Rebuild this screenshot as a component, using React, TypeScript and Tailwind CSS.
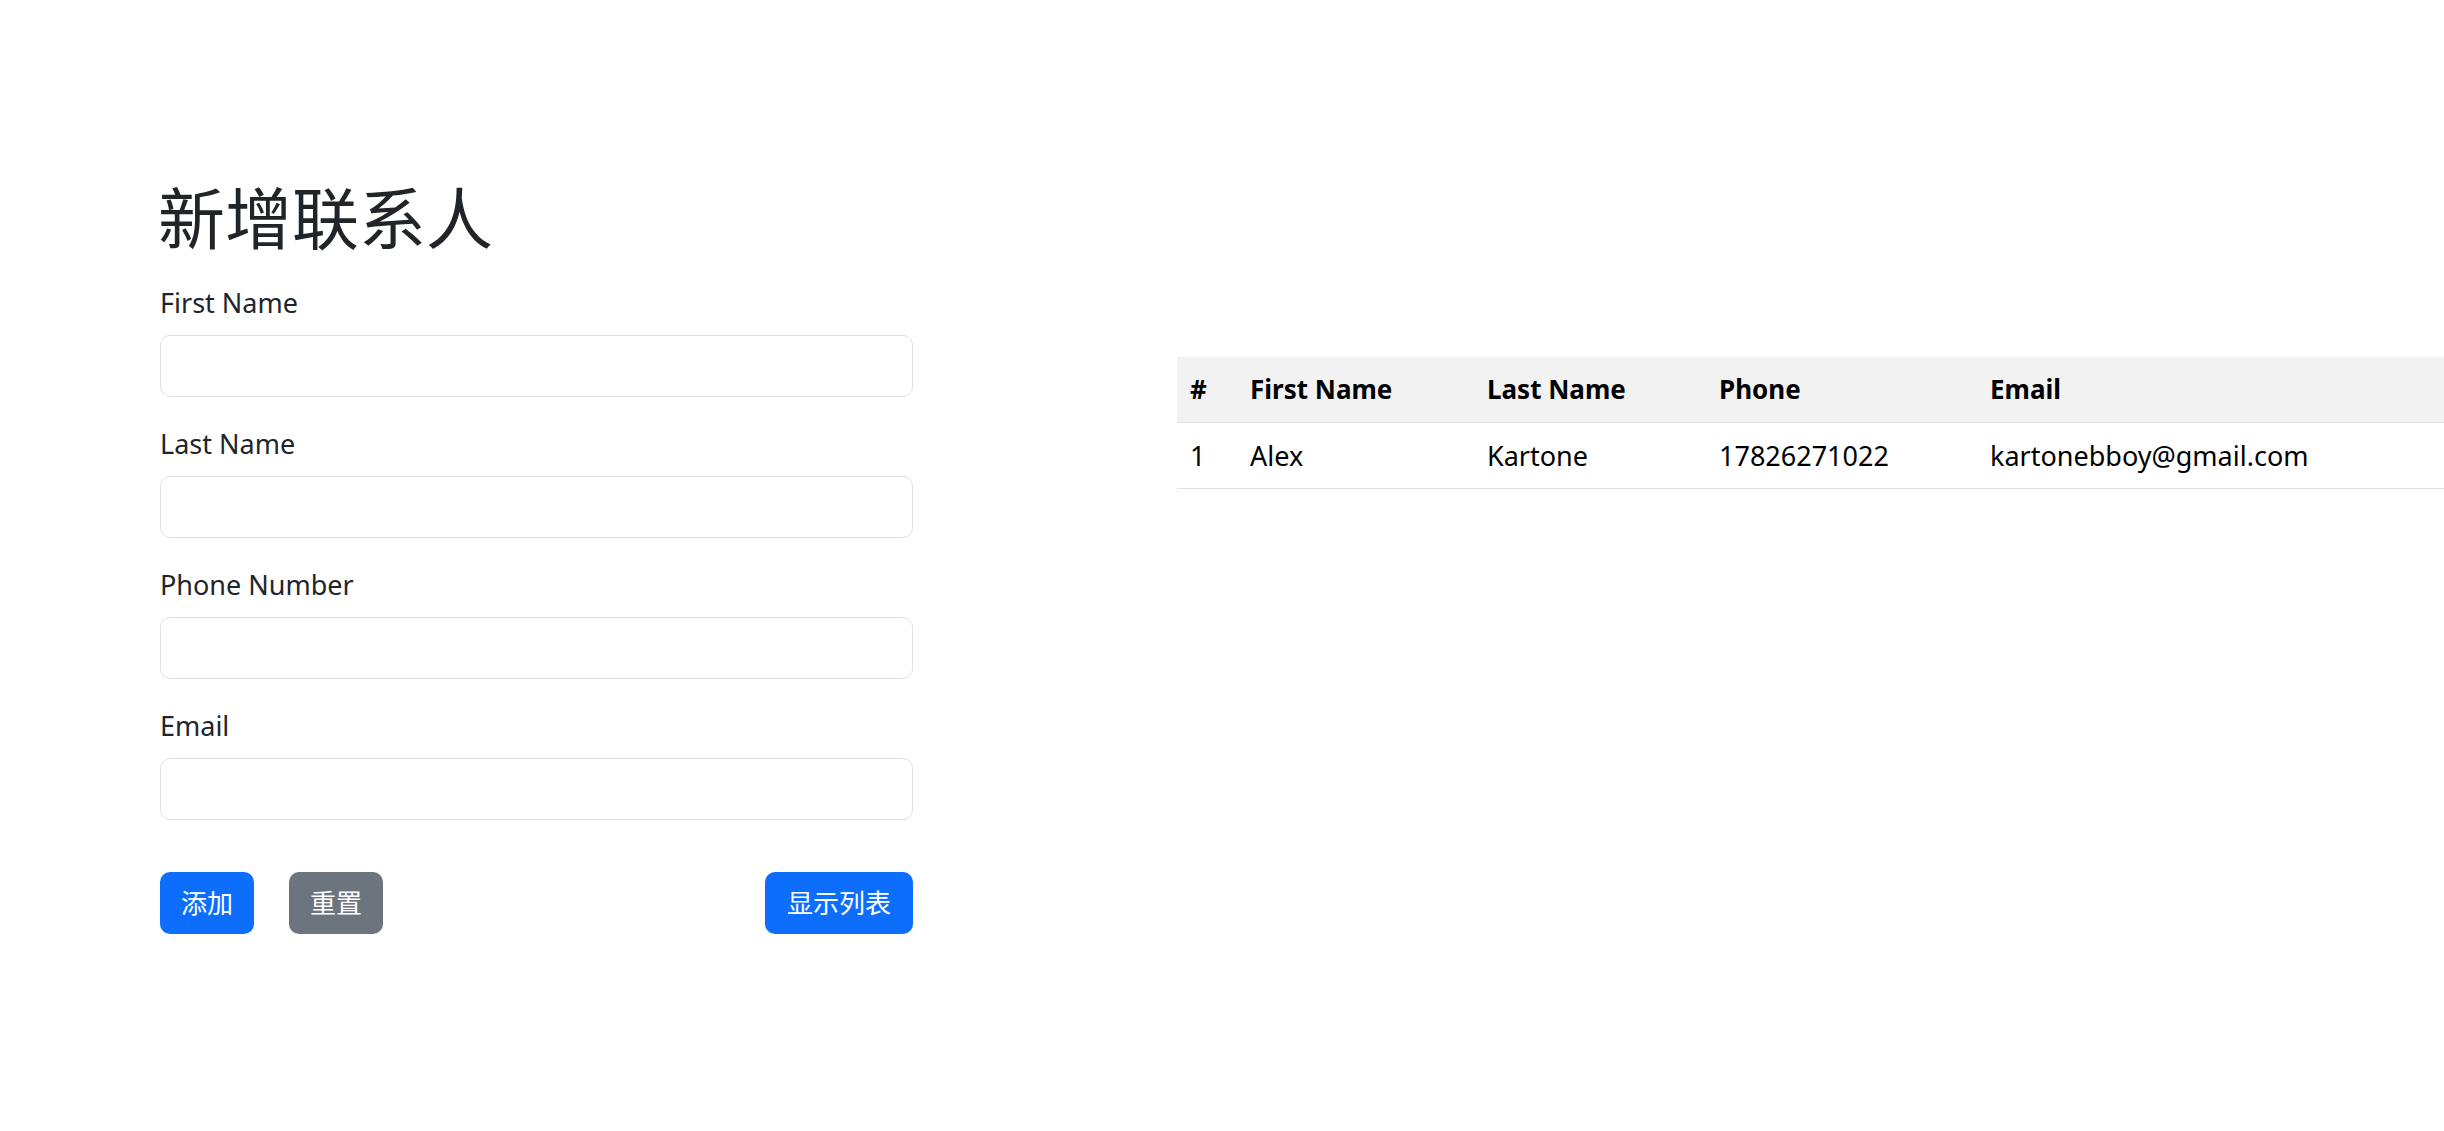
const contacts = [
  { id: 1, first: 'Alex', last: 'Kartone', phone: '17826271022', email: 'kartonebboy@gmail.com' },
];

const fields = ['First Name', 'Last Name', 'Phone Number', 'Email'];

export default function App() {
  return (
    <div
      className="flex w-full min-h-[1131px] bg-white text-[#212529] overflow-hidden pl-[160px]"
      style={{ fontFamily: '"Noto Sans", "Noto Sans CJK SC", sans-serif' }}
    >
      {/* form */}
      <div className="w-[753px] shrink-0 pt-[179px]">
        <h1 className="text-[67px] leading-[78px] font-normal mb-[26px] -ml-[2px]">新增联系人</h1>
        <form onSubmit={(e) => e.preventDefault()}>
          {fields.map((f) => (
            <div key={f} className="mb-[27px]">
              <label className="block text-[27px] leading-[39px] mb-[13px]">{f}</label>
              <input
                type="text"
                className="block w-full h-[62px] border border-[#dee2e6] rounded-[10px] px-[19px] text-[26px] focus:outline-none"
              />
            </div>
          ))}
          <div className="flex items-center gap-[35px] mt-[52px]">
            <button className="h-[62px] px-[21px] rounded-[10px] bg-[#0d6efd] text-white text-[26px]">添加</button>
            <button
              type="reset"
              className="h-[62px] px-[21px] rounded-[10px] bg-[#6c757d] text-white text-[26px]"
            >
              重置
            </button>
            <button className="ml-auto h-[62px] px-[22px] rounded-[10px] bg-[#0d6efd] text-white text-[26px]">
              显示列表
            </button>
          </div>
        </form>
      </div>

      {/* table */}
      <div className="flex-1 min-w-0 pl-[264px] pt-[357px]">
        <table className="w-full border-collapse text-[27px] leading-[39px] text-left">
          <thead>
            <tr className="bg-[#f2f2f2] text-black border-b border-[#dee2e6] text-[26px]">
              <th className="w-[60px] px-[13px] py-[13px] font-bold">#</th>
              <th className="w-[237px] px-[13px] py-[13px] font-bold">First Name</th>
              <th className="w-[232px] px-[13px] py-[13px] font-bold">Last Name</th>
              <th className="w-[271px] px-[13px] py-[13px] font-bold">Phone</th>
              <th className="px-[13px] py-[13px] font-bold">Email</th>
            </tr>
          </thead>
          <tbody>
            {contacts.map((c) => (
              <tr key={c.id} className="border-b border-[#dee2e6] text-black">
                <td className="px-[13px] py-[13px]">{c.id}</td>
                <td className="px-[13px] py-[13px]">{c.first}</td>
                <td className="px-[13px] py-[13px]">{c.last}</td>
                <td className="px-[13px] py-[13px]">{c.phone}</td>
                <td className="px-[13px] py-[13px]">{c.email}</td>
              </tr>
            ))}
          </tbody>
        </table>
      </div>
    </div>
  );
}
